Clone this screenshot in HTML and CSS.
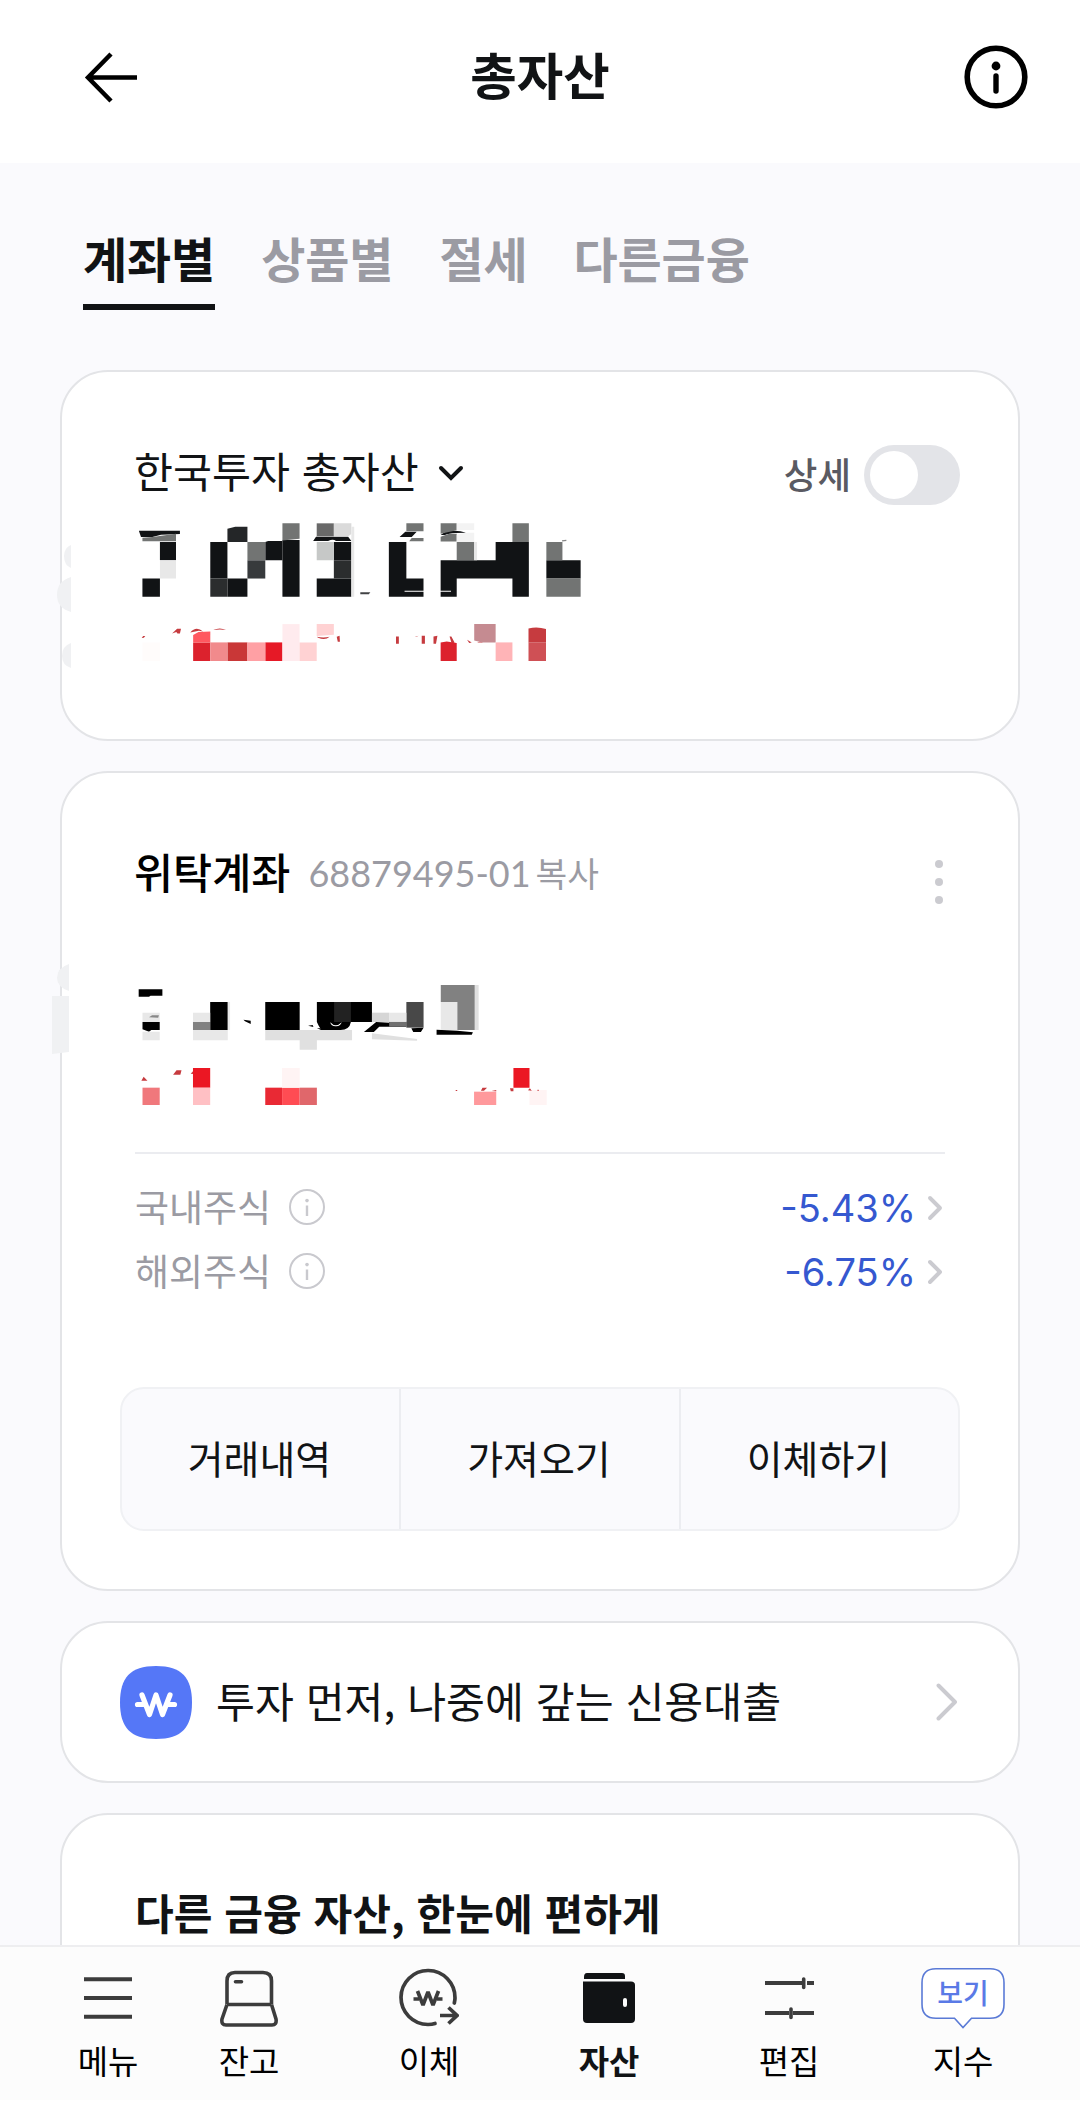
FILE: index.html
```html
<!DOCTYPE html>
<html lang="ko">
<head>
  <meta charset="UTF-8">
  <title>총자산</title>
  <link rel="stylesheet" href="styles.css">
</head>
<body>

  <header class="topbar">
    <svg class="back" width="56" height="56" viewBox="0 0 56 56" fill="none" stroke="#000" stroke-width="4.5">
      <path d="M28 5 L5 28.5 L28 52 M5 28.5 H54"/>
    </svg>
    <h1>총자산</h1>
    <svg class="info" width="64" height="64" viewBox="0 0 64 64">
      <circle cx="32" cy="32" r="28.8" fill="none" stroke="#000" stroke-width="5.6"/>
      <circle cx="32" cy="21" r="4.4"/>
      <path d="M32 31 V46" stroke="#000" stroke-width="5.4" stroke-linecap="round"/>
    </svg>
  </header>

  <main>
    <nav class="tabs">
      <span class="tab active">계좌별</span>
      <span class="tab">상품별</span>
      <span class="tab">절세</span>
      <span class="tab">다른금융</span>
    </nav>

    <!-- Total assets -->
    <section class="card total">
      <svg class="edge" width="16" height="124" viewBox="0 0 16 124" fill="#f0f1f3">
        <path d="M14 0 Q7 3 7 11 Q7 20 14 23 Z M14 32 Q0 36 0 50 Q0 63 14 67 Z M14 98 Q5 101 5 111 Q5 120 14 123 Z"/>
      </svg>
      <div class="total-head">
        <div class="total-title">
          <span>한국투자 총자산</span>
          <svg width="26" height="16" viewBox="0 0 26 16" fill="none" stroke="#111315" stroke-width="4" stroke-linecap="round">
            <path d="M3 3 L13 13 L23 3"/>
          </svg>
        </div>
        <div class="detail">
          <span>상세</span>
          <span class="toggle"></span>
        </div>
      </div>
      <!-- Masked amount -->
      <svg class="mask" width="450" height="153" viewBox="270 480 1260 460" preserveAspectRatio="none">
        <g fill="#111315">
          <path d="M278 512H393V522L340 524 316 531H284Z"/>
          <path d="M337 546H382V601H337Z M288 656H337V711H288Z M478 546H526V656H478Z M526 656H582V711H526Z M680 540H728V711H680Z"/>
          <path d="M824 546H873V601H824Z M776 656H873V711H776Z M766 543L774 530H864L873 543H830Q822 536 808 543Z"/>
          <path d="M978 546H1027V656H1075V711H978Z M1008 531L1024 515H1056L1042 531Z M1123 525Q1140 510 1160 512Q1180 512 1194 518L1165 519Q1145 520 1135 525Z"/>
          <path d="M1277 546H1370V711H1324V656H1168V711H1123V601H1277Z M1419 601H1515V656H1419Z M632 546L640 543H680V601H632Z"/>
          <path d="M898 697H926L922 703H898Z" opacity=".8"/>
        </g>
        <path d="M526 506L548 500H582V546H526Z" fill="#242628"/>
        <path d="M478 656H526V711H478Z M824 601H873V656H824Z" fill="#2b2d2e"/>
        <path d="M582 601H632V656H582Z" fill="#373a3c"/>
        <path d="M316 531L382 521V544H288V533Z M680 490H728V536L680 542Z M582 546H632V601H582Z M1324 490H1370V546H1324Z M1419 546H1464V601H1419Z M1168 546H1217V601H1168Z M1419 656H1515V711H1419Z M1027 490H1075V514H1027Z M1042 534H1075V544H1035Z M1123 490H1168V511L1123 521Z M1123 530L1145 522 1168 521V545H1123Z" fill="#727473"/>
        <path d="M776 490H824V529H776Z" fill="#696969"/>
        <path d="M824 490H873V522L864 529H824Z" fill="#dadada"/>
        <path d="M776 546H824V601H776Z" fill="#c6c8c7"/>
        <path d="M337 601H382V656H337Z M873 500H881V711H873Z M1217 546H1225V601H1217Z" fill="#e8e8e8"/>
        <path d="M1168 490H1217V510H1168Z M1194 518H1217V546H1168V524Z" fill="#f3f3f3"/>
        <path d="M1022 694H1152" stroke="#fff" stroke-width="3"/>
        <path d="M1463 543L1475 541" stroke="#888" stroke-width="4"/>

        <g fill="#c63b3f">
          <path d="M286 835L290 829H296L292 834Z M371 821L385 807H396L393 821H386L383 817Z M422 818Q438 798 458 815L446 813Z M486 811Q505 801 522 811L505 809Z"/>
          <path d="M776 831Q795 835 812 831Q800 843 780 834Z M832 831L840 828 841 846H835Z M998 830H1006V852H998Z M1070 828H1079V852H1070Z M1103 830L1114 828 1110 852H1103Z M1148 830H1153L1162 848 1154 852Z M1050 832L1061 828 1056 831Z M1197 840L1210 848 1203 850Z M1225 848L1240 842V848Z"/>
          <path d="M1369 806Q1395 800 1418 808V848H1369Z"/>
        </g>
        <path d="M430 848H478V904H430Z M1123 848L1140 845 1168 850V904H1123Z" fill="#dc222d"/>
        <path d="M632 848H680V904H632Z" fill="#e61926"/>
        <path d="M430 826L445 817 478 815V848H430Z" fill="#ff5860"/>
        <path d="M526 848H582V904H526Z" fill="#c93737"/>
        <path d="M478 848H526V904H478Z" fill="#f18a8c"/>
        <path d="M582 848H632V904H582Z" fill="#ffa0a4"/>
        <path d="M680 793H728V904H680Z" fill="#ffebee"/>
        <path d="M728 848H776V904H728Z M776 793H824V825L776 829Z" fill="#ffd2d3"/>
        <path d="M1217 793H1277V848H1240L1217 842Z" fill="#c58b91"/>
        <path d="M1277 848H1324V904H1277Z" fill="#ffb4b7"/>
        <path d="M1369 848H1418V904H1369Z" fill="#cf5055"/>
        <path d="M288 848H337V904H288Z" fill="#fffcfb"/>
      </svg>
    </section>

    <!-- Brokerage account -->
    <section class="card account">
      <svg class="edge" width="18" height="92" viewBox="0 0 18 92" fill="#f0f1f3">
        <path d="M17 0 Q5 4 5 14 Q5 23 17 27 Z M0 32 H17 V88 L0 90 Z"/>
      </svg>
      <div class="account-head">
        <div class="account-name">
          <strong>위탁계좌</strong>
          <span class="number">68879495-01</span>
          <span class="copy">복사</span>
        </div>
        <svg class="more" width="8" height="44" viewBox="0 0 8 44" fill="#cbcbd0">
          <circle cx="4" cy="4" r="4"/>
          <circle cx="4" cy="22" r="4"/>
          <circle cx="4" cy="40" r="4"/>
        </svg>
      </div>
      <!-- Masked balance -->
      <svg class="mask" width="413" height="130" viewBox="250 660 1080 390" preserveAspectRatio="none">
        <path d="M257 688H319V707H288L284 710H257Z M267 786H312V810H290L284 815 267 808Z M444 726H490V810H444Z M588 726H678V810H588Z"/>
        <path d="M723 726H867V786H812Q808 810 785 810H735Q728 800 723 786Z M846 816L878 786 912 788V800H886L872 816Z M912 786H957V800H912Z M970 805L1002 803 995 816H975Z M1036 809L1090 812 1131 817 1128 824H1036Z M531 779L550 782V792L535 784Z"/>
        <path d="M700 797L712 795 714 801Z M723 804L760 808 735 811Z"/>
        <path d="M768 726H812V786H768Z" fill="#222"/>
        <path d="M758 787Q772 805 788 787Q784 800 772 799Q760 799 758 787Z" fill="#fff"/>
        <path d="M957 726H1002V803H957Z" fill="#484848"/>
        <path d="M1047 675H1136V810H1090V726H1047Z M399 786H444V810H399Z" fill="#818181"/>
        <path d="M912 785H957V800H912Z" fill="#707070"/>
        <path d="M867 758H912V786H867Z" fill="#d6d6d6"/>
        <path d="M267 758H312V786H267Z M399 758H444V786H399Z M912 758H957V785H912Z M1047 726H1090V810H1047Z M490 726H496V810H490Z M399 810H490V841H399Z M267 815H312V841H267Z" fill="#e8e8e8"/>
        <path d="M588 810H815V841H723V869H678V841H588Z M1136 675H1146V810H1136Z M867 820L985 837V842L867 838Z" fill="#e0e0e0"/>
        <path d="M284 772L292 766H310L308 773Z" fill="#888"/>

        <path d="M399 924H444V983H399Z M1237 924H1279V983H1237Z" fill="#eb1723"/>
        <path d="M267 983H312V1035H267Z" fill="#f0787c"/>
        <path d="M399 983H444V1035H399Z" fill="#ffc0c4"/>
        <path d="M588 983H632V1035H588Z" fill="#e92934"/>
        <path d="M632 983H678V1035H632Z" fill="#ff4c53"/>
        <path d="M678 983H723V1035H678Z" fill="#e0676b"/>
        <path d="M1134 995H1192V1035H1134Z" fill="#ff999c"/>
        <path d="M632 924H678V983H632Z M1279 990H1324V1035H1279Z" fill="#fff4f4"/>
        <path d="M264 962L270 950 280 962Z M347 944L356 931H369L366 944Z M393 941L399 934V942Z M1152 992L1156 983H1168L1160 992Z M1228 985H1237V994H1230Z M1275 991L1280 985 1285 992Z M1086 990H1090V993H1086Z M1300 989H1303V993H1300Z M1180 993L1192 990V994Z" fill="#c63b3f"/>
      </svg>

      <ul class="stocks">
        <li>
          <span class="label">국내주식</span>
          <svg class="hint" width="36" height="36" viewBox="0 0 36 36"><circle cx="18" cy="18" r="17" fill="none" stroke="#c9c9ce" stroke-width="2"/><circle cx="18" cy="11.6" r="1.8"/><path d="M16.8 16.5h2.4v10.5h-2.4z"/></svg>
          <span class="rate">-5.43%</span>
          <svg class="go" width="16" height="26" viewBox="0 0 16 26"><path d="M3 3 L13 13 L3 23"/></svg>
        </li>
        <li>
          <span class="label">해외주식</span>
          <svg class="hint" width="36" height="36" viewBox="0 0 36 36"><circle cx="18" cy="18" r="17" fill="none" stroke="#c9c9ce" stroke-width="2"/><circle cx="18" cy="11.6" r="1.8"/><path d="M16.8 16.5h2.4v10.5h-2.4z"/></svg>
          <span class="rate">-6.75%</span>
          <svg class="go" width="16" height="26" viewBox="0 0 16 26"><path d="M3 3 L13 13 L3 23"/></svg>
        </li>
      </ul>

      <div class="actions">
        <button>거래내역</button>
        <button>가져오기</button>
        <button>이체하기</button>
      </div>
    </section>

    <section class="card loan">
      <svg width="72" height="73" viewBox="0 0 72 73">
        <path d="M36 0 C62 0 72 12 72 36.500 C72 61 62 73 36 73 C10 73 0 61 0 36.500 C0 12 10 0 36 0Z" fill="#5577f7"/>
        <path d="M22 29 L29.500 48.500 L36 29 L42.500 48.500 L50 29 M17.500 38.500 H25 M47 38.500 H54.500" fill="none" stroke="#fff" stroke-width="5.200" stroke-linecap="round" stroke-linejoin="round"/>
      </svg>
      <span>투자 먼저, 나중에 갚는 신용대출</span>
      <svg class="go" width="22" height="38" viewBox="0 0 22 38"><path d="M2.500 2.500 L19 19 L2.500 35.500"/></svg>
    </section>

    <section class="card other">
      <h2>다른 금융 자산, 한눈에 편하게</h2>
    </section>
  </main>

  <!-- Bottom navigation -->
  <nav class="bottom">
    <a class="item">
      <svg width="60" height="64" viewBox="0 0 60 64" stroke="#3c3c3c" stroke-width="4"><path d="M6 14.300H54 M6 33H54 M6 51.700H54"/></svg>
      <span>메뉴</span>
    </a>
    <a class="item">
      <svg width="60" height="64" viewBox="0 0 60 64" fill="none" stroke="#3c3c3c" stroke-width="3.600" stroke-linejoin="round">
        <path d="M8 39 V16 Q8 7.500 16 7.500 H44 Q52.500 7.500 52.500 16 V39 M8 39.500 H52.500 M8 39.500 L3 54 Q2 60 7 60 H53 Q58 60 57 54 L52.500 39.500"/>
        <path d="M16.500 16.700 H22.500" stroke-linecap="round"/>
      </svg>
      <span>잔고</span>
    </a>
    <a class="item">
      <svg width="60" height="64" viewBox="0 0 60 64" fill="none" stroke="#3c3c3c" stroke-width="3.700">
        <path d="M55.300 38 Q56 35 56 33 A27 27 0 1 0 29 59.500 Q33 59.500 36 58.500" stroke-linecap="round"/>
        <path d="M18.500 26 L24 40 L29 27 L34 40 L39.500 26 M14.500 34 H20 M38 34 H43.500" stroke-linejoin="bevel"/>
        <path d="M41 50.500 H58 M49.500 42.500 L58 50.500 L49.500 58.500"/>
      </svg>
      <span>이체</span>
    </a>
    <a class="item active">
      <svg width="60" height="64" viewBox="0 0 60 64" fill="#111315">
        <path d="M5 12 Q5 8 8 8 H43 Q46 8 46 11 V14 H5Z"/>
        <path fill-rule="evenodd" d="M4 16.500 H52 Q56 16.500 56 20 V54 Q56 58 52 58 H8 Q4 58 4 54Z M46 33 Q44 33 44 35 V40 Q44 42 46 42 Q48 42 48 40 V35 Q48 33 46 33Z"/>
      </svg>
      <span>자산</span>
    </a>
    <a class="item">
      <svg width="60" height="64" viewBox="0 0 60 64" stroke="#3c3c3c" stroke-width="4">
        <path d="M6 18 H43 M48 18 H55 M6 48 H30 M34 48 H55"/>
        <path d="M44.700 14 V22.500 M32 44 V52.500" stroke-linecap="round" stroke-width="3.600"/>
      </svg>
      <span>편집</span>
    </a>
    <a class="item last">
      <div class="bubble">
        <svg width="84" height="64" viewBox="0 0 84 64">
          <path d="M15 3.800 H69 Q83 3.800 83 17.800 V39.300 Q83 53.300 69 53.300 H50.500 L42 62.500 L33.500 53.300 H15 Q1 53.300 1 39.300 V17.800 Q1 3.800 15 3.800Z" fill="#fff" stroke="#5a7ad6" stroke-width="1.600"/>
        </svg>
        <em>보기</em>
      </div>
      <span>지수</span>
    </a>
  </nav>

</body>
</html>
```
FILE: styles.css
```css
* {
  box-sizing: border-box;
}

body {
  margin: 0;
  height: 2119px;
  overflow: hidden;
  display: flex;
  flex-direction: column;
  font-family: "Noto Sans CJK KR", sans-serif;
  color: #111315;
  background: #fff;
}

svg {
  display: block;
  flex: none;
}

.topbar {
  height: 163px;
  flex: none;
  padding: 0 52px 9px 83px;
  display: grid;
  grid-template-columns: 64px 1fr 64px;
  align-items: center;
}

.topbar h1 {
  margin: 0 31px 0 0;
  padding-bottom: 8px;
  font-size: 50.5px;
  line-height: 60px;
  font-weight: 700;
  text-align: center;
}

main {
  height: 1782px;
  flex: none;
  overflow: hidden;
  background: #fafafd;
  padding: 58px 60px 0;
}

.tabs {
  display: flex;
  gap: 46px;
  height: 89px;
  margin: 0 0 60px 23px;
}

.tab {
  height: 89px;
  font-size: 48px;
  line-height: 72px;
  font-weight: 700;
  letter-spacing: -0.1px;
  color: #9b9ba3;
}

.tab.active {
  color: #111315;
  border-bottom: 6px solid #111315;
}

.card {
  position: relative;
  background: #fff;
  border: 2px solid #e3e4e7;
  border-radius: 48px;
  margin-bottom: 30px;
}

/* Faint shapes over the left border */
.edge {
  position: absolute;
}

.mask {
  margin-left: 74px;
}

.total {
  height: 371px;
  padding-top: 73px;
}

.total .edge {
  left: -5px;
  top: 173px;
}

.total-head {
  height: 60px;
  padding: 0 58px 0 72px;
  display: flex;
  justify-content: space-between;
}

.total-title {
  display: flex;
  align-items: center;
  gap: 19px;
  height: 48px;
  font-size: 42.4px;
}

.total-title svg {
  margin-top: 7px;
}

.detail {
  display: flex;
  align-items: center;
  gap: 13px;
  font-size: 36.5px;
  line-height: 55px;
  font-weight: 500;
  color: #5a5a62;
}

.detail span:first-child {
  margin-top: -4px;
}

.toggle {
  width: 96px;
  height: 60px;
  padding: 6px;
  border-radius: 30px;
  background: #e3e4e8;
}

.toggle::before {
  content: "";
  display: block;
  width: 48px;
  height: 48px;
  border-radius: 50%;
  background: #fff;
}

.total .mask {
  margin-top: 15px;
}

.account {
  height: 820px;
  padding-top: 68px;
}

.account .edge {
  left: -10px;
  top: 191px;
}

.account-head {
  height: 66px;
  padding: 0 75px 0 72px;
  display: flex;
  justify-content: space-between;
}

.account-name {
  display: flex;
  align-items: baseline;
  line-height: 60px;
}

.account-name strong {
  font-size: 42.5px;
  font-weight: 500;
  color: #000;
}

.number {
  position: relative;
  top: -2px;
  margin-left: 18px;
  font-family: Lato, sans-serif;
  font-size: 36px;
  color: #9b9ba3;
}

.copy {
  position: relative;
  top: -2px;
  margin-left: 5px;
  font-size: 34.5px;
  color: #9b9ba3;
}

.more {
  margin-top: 19px;
}

.account .mask {
  margin-top: 73px;
}

.stocks {
  list-style: none;
  margin: 42px 73px 0;
  padding: 21px 0 0;
  border-top: 2px solid #ebecf0;
}

.stocks li {
  display: flex;
  align-items: center;
  height: 64px;
}

.label {
  margin-top: -3px;
  width: 154px;
  font-size: 37px;
  line-height: 60px;
  color: #9b9ba3;
}

.hint {
  fill: #c9c9ce;
}

.rate {
  margin: 1px 11px 0 auto;
  font-family: Inter, sans-serif;
  font-size: 38px;
  color: #3558d0;
}

.go {
  fill: none;
  stroke: #cbcbd0;
  stroke-width: 3.9;
  stroke-linecap: round;
  stroke-linejoin: round;
}

.stocks .go {
  margin: 2px 2px 0 0;
}

.actions {
  display: grid;
  grid-template-columns: 277px 280px 1fr;
  height: 144px;
  margin: 84px 58px 0;
  border: 2px solid #f0f1f4;
  border-radius: 24px;
  background: #fafafd;
}

.actions button {
  border: 0;
  padding: 0 2px 5px 0;
  background: none;
  font-family: inherit;
  font-size: 39px;
  color: #111315;
}

.actions button + button {
  border-left: 2px solid #ecedf1;
}

.loan {
  height: 162px;
  padding: 0 60px 0 58px;
  display: flex;
  align-items: center;
  font-size: 42.3px;
}

.loan span {
  margin: -4px auto 0 24px;
  line-height: 60px;
}

.other {
  height: 300px;
  padding: 66px 73px 0;
}

.other h2 {
  margin: 0;
  font-size: 42.1px;
  line-height: 62px;
  font-weight: 700;
}

.bottom {
  height: 155px;
  flex: none;
  padding: 18px 0 0 57px;
  display: grid;
  grid-template-columns: 102px 180px 180px 180px 180px 168px;
  border-top: 2px solid #eeeef0;
  background: #fcfcfc;
}

.item {
  display: flex;
  flex-direction: column;
  align-items: center;
  font-size: 33px;
  line-height: 48px;
  color: #000;
}

.item > span {
  margin-top: 7px;
}

.item.active {
  font-weight: 700;
  color: #111315;
}

.bubble {
  position: relative;
}

.bubble em {
  position: absolute;
  inset: 0;
  font-style: normal;
  font-size: 28px;
  line-height: 55px;
  font-weight: 500;
  text-align: center;
  color: #5a7ae6;
}
```
